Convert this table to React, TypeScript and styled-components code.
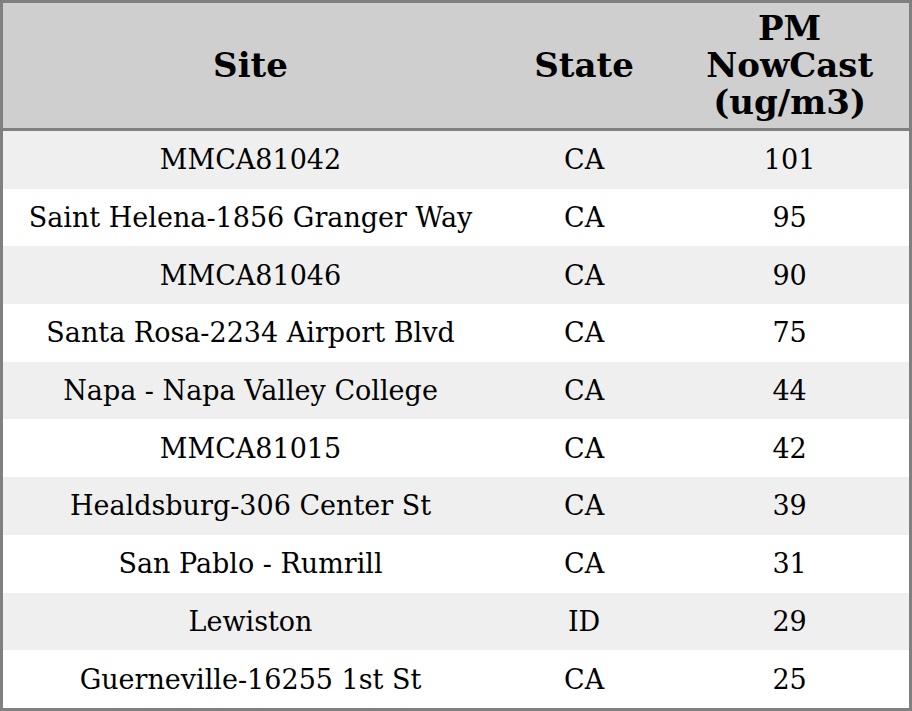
import React from "react";
import styled, { createGlobalStyle } from "styled-components";

const Global = createGlobalStyle`
  html, body { margin: 0; padding: 0; background: #ffffff; }
  body { font-family: "DejaVu Serif", serif; }
`;

const Table = styled.table`
  width: 912px;
  height: 711px;
  border-collapse: collapse;
  border: 3px solid #808080;
  font-family: "DejaVu Serif", serif;
  color: #000;
  table-layout: fixed;
`;

const Col = styled.col<{ $w: number }>`
  width: ${(p) => p.$w}px;
`;

const HeadCell = styled.th`
  box-sizing: border-box;
  height: 128px;
  background: #cfcfcf;
  font-size: 34px;
  font-weight: bold;
  text-align: center;
  vertical-align: middle;
  padding: 0;
  line-height: 37px;
  border-bottom: 3px solid #808080;
`;

const Row = styled.tr<{ $alt: boolean }>`
  background: ${(p) => (p.$alt ? "#efefef" : "#ffffff")};
`;

const Cell = styled.td`
  font-size: 27px;
  text-align: center;
  vertical-align: middle;
  padding: 0;
  height: 57px;
  white-space: nowrap;
`;

const rows: [string, string, string][] = [
  ["MMCA81042", "CA", "101"],
  ["Saint Helena-1856 Granger Way", "CA", "95"],
  ["MMCA81046", "CA", "90"],
  ["Santa Rosa-2234 Airport Blvd", "CA", "75"],
  ["Napa - Napa Valley College", "CA", "44"],
  ["MMCA81015", "CA", "42"],
  ["Healdsburg-306 Center St", "CA", "39"],
  ["San Pablo - Rumrill", "CA", "31"],
  ["Lewiston", "ID", "29"],
  ["Guerneville-16255 1st St", "CA", "25"],
];

export default function App() {
  return (
    <>
      <Global />
      <Table>
        <colgroup>
          <Col $w={496} />
          <Col $w={172} />
          <Col $w={240} />
        </colgroup>
        <thead>
          <tr>
            <HeadCell>Site</HeadCell>
            <HeadCell>State</HeadCell>
            <HeadCell>
              PM
              <br />
              NowCast
              <br />
              (ug/m3)
            </HeadCell>
          </tr>
        </thead>
        <tbody>
          {rows.map((r, i) => (
            <Row key={i} $alt={i % 2 === 0}>
              <Cell>{r[0]}</Cell>
              <Cell>{r[1]}</Cell>
              <Cell>{r[2]}</Cell>
            </Row>
          ))}
        </tbody>
      </Table>
    </>
  );
}
